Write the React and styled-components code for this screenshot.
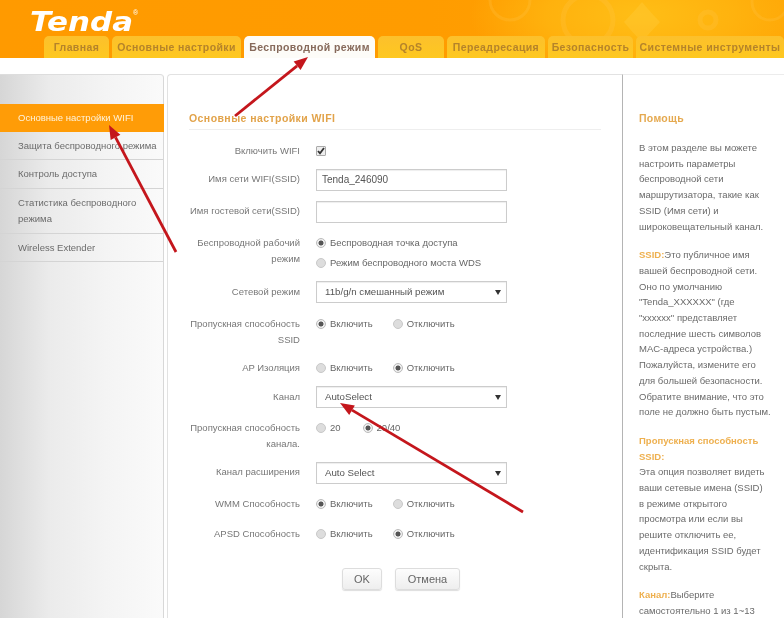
import React from "react";
import styled, { createGlobalStyle } from "styled-components";

const Global = createGlobalStyle`
  html, body { margin: 0; padding: 0; background: #fff; }
  body { width: 784px; height: 618px; overflow: hidden; font-family: "Liberation Sans", Arial, sans-serif; color: #666; }
  * { box-sizing: border-box; }
`;
const Page = styled.div`position: relative; width: 784px; height: 618px; overflow: hidden; filter: blur(.35px);`;
const Header = styled.header`
  position: relative; height: 58px;
  background:
    radial-gradient(ellipse 170px 70px at 640px 15px, #ffbe16 0, rgba(255,182,16,.8) 55%, rgba(255,160,0,0) 100%),
    linear-gradient(90deg, #ff9a00 0%, #ff9c00 55%, #ffa606 100%);
`;
const Bubbles = styled.svg`position: absolute; inset: 0; width: 784px; height: 58px;`;
const Logo = styled.svg`position: absolute; left: 28px; top: 4px; width: 116px; height: 32px; overflow: visible;`;
const Tabs = styled.nav`position: absolute; left: 44px; top: 36px; display: flex; gap: 3px; height: 22px;`;
const Tab = styled.div`
  width: ${p => p.$w}px; height: 22px; flex: none; border-radius: 5px 5px 0 0;
  display: flex; align-items: center; justify-content: center; white-space: nowrap;
  font-size: 10.5px; font-weight: bold; letter-spacing: .4px; padding-bottom: 1px;
  color: ${p => p.$active ? "#86695a" : "#b5832a"};
  background: ${p => p.$active ? "#fdfcf8" : "linear-gradient(180deg,#fcc02c,#fec820)"};
`;
const Content = styled.main`display: flex; height: 560px; padding-top: 16px;`;
const Sidebar = styled.aside`
  width: 164px; flex: none; padding-top: 29px; border-top: 1px solid #ddd; border-right: 1px solid #d8d8d8;
  border-top-right-radius: 4px; background: linear-gradient(90deg,#d6d6d6 0%,#ebebeb 30%,#f4f4f4 65%,#fafafa 100%);
`;
const MenuItem = styled.div`
  min-height: ${p => p.$h}px; padding: 6px 6px 0 18px; font-size: 9.5px; line-height: 16px; white-space: ${p => p.$wrap ? "normal" : "nowrap"};
  border-bottom: 1px solid ${p => p.$active ? "transparent" : "#d4d4d4"};
  color: ${p => p.$active ? "#fff3dc" : "#6b6b6b"};
  background: ${p => p.$active ? "#ff9c07" : "transparent"};
  margin-right: ${p => p.$active ? "-1px" : "0"};
`;
const Panel = styled.section`
  margin-left: 3px; width: 456px; flex: none; padding: 36px 21px 0 21px;
  border: 1px solid #e2e2e2; border-right: 1px solid #b4b4b4; border-bottom: 0; border-top-left-radius: 4px;
`;
const SectionTitle = styled.h2`
  margin: 0 0 12px; height: 19px; font-size: 10.5px; line-height: 15px; font-weight: bold; color: #e2a34a;
  letter-spacing: .43px; border-bottom: 1px solid #eee;
`;
const Row = styled.div`display: flex; height: ${p => p.$h}px; gap: 16px;`;
const Label = styled.div`
  width: 111px; flex: none; text-align: right; font-size: 9.5px; line-height: 16px; color: #777; padding-top: ${p => p.$t || 0}px;
`;
const Control = styled.div`display: flex; flex-direction: column; gap: 4px; padding-top: ${p => p.$t || 0}px;`;
const Check = styled.span`
  width: 10px; height: 10px; margin: 3px 0 0; background: #eee; border: 1px solid #aaa; border-radius: 1px;
  display: flex; align-items: center; justify-content: center;
`;
const TextBox = styled.div`
  width: 191px; height: 22px; border: 1px solid #ccc; box-shadow: inset 0 1px 1px #eee;
  padding: 0 5px; font-size: 10px; line-height: 20px; color: #555;
`;
const SelectBox = styled(TextBox)`
  display: flex; justify-content: space-between; align-items: center; padding: 0 5px 0 8px; font-size: 9.7px;
  &::after { content: ""; border: 3px solid transparent; border-top: 5px solid #333; border-bottom: 0; }
`;
const RadioRow = styled.div`display: flex; height: 16px; align-items: center; gap: ${p => p.$gap || 20}px;`;
const RadioWrap = styled.label`display: flex; align-items: center; gap: 4px; font-size: 9.5px; line-height: 16px; color: #666;`;
const Dot = styled.span`
  width: 10px; height: 10px; border-radius: 50%; flex: none;
  border: 1px solid ${p => p.$on ? "#bbb" : "#c8c8c8"};
  background: ${p => p.$on ? "radial-gradient(circle,#555 0,#555 2.2px,#eee 2.8px)" : "#ddd"};
`;
const Buttons = styled.div`display: flex; gap: 13px; margin: 0 0 0 153px;`;
const Btn = styled.button`
  width: ${p => p.$w}px; height: 22px; padding: 0; border: 1px solid #ddd; border-radius: 3px; font: 11px "Liberation Sans", sans-serif;
  color: #666; background: linear-gradient(180deg,#fdfdfd,#eee); box-shadow: 0 1px 1px #ddd;
`;
const Help = styled.aside`flex: 1; padding: 36px 0 0 16px; border-top: 1px solid #ececec; font-size: 9.5px; line-height: 15.7px; color: #6a6a6a;`;
const HelpTitle = styled.h3`margin: 0 0 14px; font-size: 10.5px; line-height: 15px; font-weight: bold; color: #e5a94f; letter-spacing: .3px;`;
const HelpText = styled.p`margin: 0 0 13px; width: 140px; white-space: nowrap;`;
const Mark = styled.b`color: #eeb04f;`;
const Arrows = styled.svg`position: absolute; inset: 0; width: 784px; height: 618px; pointer-events: none;`;

const Radio = ({ on, children }) => <RadioWrap><Dot $on={on} />{children}</RadioWrap>;
const Pair = ({ first, a = "Включить", b = "Отключить", gap }) => (
  <RadioRow $gap={gap}><Radio on={first}>{a}</Radio><Radio on={!first}>{b}</Radio></RadioRow>
);

const tabs = [["Главная", 65], ["Основные настройки", 129], ["Беспроводной режим", 131, true], ["QoS", 66], ["Переадресация", 98], ["Безопасность", 85], ["Системные инструменты", 148]];

const Arrow = ({ x1, y1, x2, y2 }) => {
  const a = Math.atan2(y2 - y1, x2 - x1), l = 14, w = 5.5;
  const bx = x2 - l * Math.cos(a), by = y2 - l * Math.sin(a);
  const nx = -Math.sin(a) * w, ny = Math.cos(a) * w;
  return <g>
    <line x1={x1} y1={y1} x2={bx} y2={by} stroke="#c4161c" strokeWidth="2.8" />
    <polygon points={`${x2},${y2} ${bx + nx},${by + ny} ${bx - nx},${by - ny}`} fill="#c4161c" />
  </g>;
};

export default function App() {
  return (
    <Page>
      <Global />
      <Header>
        <Bubbles viewBox="0 0 784 58">
          <g fill="none" stroke="#ffc850" strokeOpacity=".22">
            <circle cx="510" cy="0" r="20" strokeWidth="3" />
            <circle cx="588" cy="20" r="25" strokeWidth="5" />
            <circle cx="708" cy="20" r="8" strokeWidth="5" />
            <circle cx="770" cy="2" r="18" strokeWidth="3" />
          </g>
          <g fill="#ffd44f" fillOpacity=".25">
            <path d="M642 2 Q652 14 660 22 Q650 32 642 42 Q632 32 624 22 Q632 14 642 2 Z" />
            <circle cx="680" cy="52" r="12" />
          </g>
        </Bubbles>
        <Logo viewBox="0 0 116 32">
          <text x="2" y="27" fill="#fff" fontFamily="DejaVu Sans" fontWeight="bold" fontStyle="italic" fontSize="27" textLength="103" lengthAdjust="spacingAndGlyphs">Tenda</text>
          <text x="105" y="11" fill="#fff" fontFamily="Liberation Sans" fontSize="7">®</text>
        </Logo>
        <Tabs>
          {tabs.map(([t, w, a]) => <Tab key={t} $w={w} $active={a}>{t}</Tab>)}
        </Tabs>
      </Header>
      <Content>
        <Sidebar>
          <MenuItem $active $h={28}>Основные настройки WIFI</MenuItem>
          <MenuItem $h={28}>Защита беспроводного режима</MenuItem>
          <MenuItem $h={29}>Контроль доступа</MenuItem>
          <MenuItem $h={45} $wrap>Статистика беспроводного режима</MenuItem>
          <MenuItem $h={28}>Wireless Extender</MenuItem>
        </Sidebar>
        <Panel>
          <SectionTitle>Основные настройки WIFI</SectionTitle>
          <Row $h={27}><Label $t={1}>Включить WIFI</Label><Control $t={1}><Check>
            <svg width="8" height="8" viewBox="0 0 8 8"><path d="M1 4l2 2.4L7 1" fill="none" stroke="#333" strokeWidth="1.8" /></svg>
          </Check></Control></Row>
          <Row $h={32}><Label $t={2}>Имя сети WIFI(SSID)</Label><Control><TextBox>Tenda_246090</TextBox></Control></Row>
          <Row $h={34}><Label $t={2}>Имя гостевой сети(SSID)</Label><Control><TextBox /></Control></Row>
          <Row $h={46}><Label>Беспроводной рабочий режим</Label><Control>
            <RadioRow><Radio on>Беспроводная точка доступа</Radio></RadioRow>
            <RadioRow><Radio>Режим беспроводного моста WDS</Radio></RadioRow>
          </Control></Row>
          <Row $h={35}><Label $t={3}>Сетевой режим</Label><Control><SelectBox>11b/g/n смешанный режим</SelectBox></Control></Row>
          <Row $h={44}><Label>Пропускная способность SSID</Label><Control><Pair first /></Control></Row>
          <Row $h={26}><Label>AP Изоляция</Label><Control><Pair /></Control></Row>
          <Row $h={34}><Label $t={3}>Канал</Label><Control><SelectBox>AutoSelect</SelectBox></Control></Row>
          <Row $h={42}><Label>Пропускная способность канала.</Label><Control><Pair first={false} a="20" b="20/40" gap={22} /></Control></Row>
          <Row $h={34}><Label $t={2}>Канал расширения</Label><Control><SelectBox>Auto Select</SelectBox></Control></Row>
          <Row $h={30}><Label>WMM Способность</Label><Control><Pair first /></Control></Row>
          <Row $h={42}><Label>APSD Способность</Label><Control><Pair /></Control></Row>
          <Buttons><Btn $w={40}>OK</Btn><Btn $w={65}>Отмена</Btn></Buttons>
        </Panel>
        <Help>
          <HelpTitle>Помощь</HelpTitle>
          <HelpText>В этом разделе вы можете<br />настроить параметры<br />беспроводной сети<br />маршрутизатора, такие как<br />SSID (Имя сети) и<br />широковещательный канал.</HelpText>
          <HelpText><Mark>SSID:</Mark>Это публичное имя<br />вашей беспроводной сети.<br />Оно по умолчанию<br />"Tenda_XXXXXX" (где<br />"xxxxxx" представляет<br />последние шесть символов<br />MAC-адреса устройства.)<br />Пожалуйста, измените его<br />для большей безопасности.<br />Обратите внимание, что это<br />поле не должно быть пустым.</HelpText>
          <HelpText><Mark>Пропускная способность<br />SSID:</Mark><br />Эта опция позволяет видеть<br />ваши сетевые имена (SSID)<br />в режиме открытого<br />просмотра или если вы<br />решите отключить ее,<br />идентификация SSID будет<br />скрыта.</HelpText>
          <HelpText><Mark>Канал:</Mark>Выберите<br />самостоятельно 1 из 1~13</HelpText>
        </Help>
      </Content>
      <Arrows viewBox="0 0 784 618">
        <Arrow x1={235} y1={116} x2={308} y2={57} />
        <Arrow x1={176} y1={252} x2={109} y2={125} />
        <Arrow x1={523} y1={512} x2={340} y2={403} />
      </Arrows>
    </Page>
  );
}
